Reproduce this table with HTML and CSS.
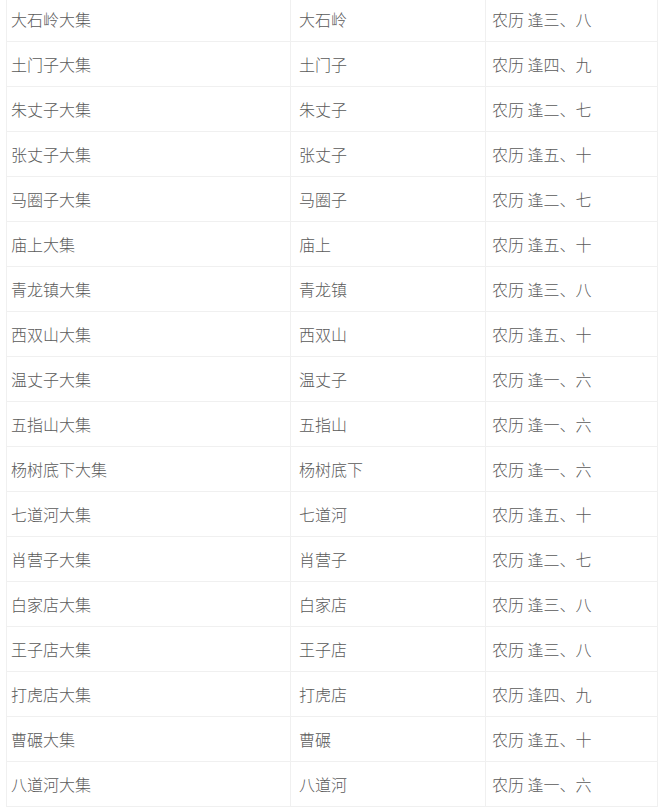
FILE: index.html
```html
<!DOCTYPE html>
<html lang="zh">
<head>
<meta charset="utf-8">
<link rel="stylesheet" href="styles.css">
</head>
<body>
<table class="markets">
<tbody>
<tr><td>大石岭大集</td><td>大石岭</td><td>农历 逢三、八</td></tr>
<tr><td>土门子大集</td><td>土门子</td><td>农历 逢四、九</td></tr>
<tr><td>朱丈子大集</td><td>朱丈子</td><td>农历 逢二、七</td></tr>
<tr><td>张丈子大集</td><td>张丈子</td><td>农历 逢五、十</td></tr>
<tr><td>马圈子大集</td><td>马圈子</td><td>农历 逢二、七</td></tr>
<tr><td>庙上大集</td><td>庙上</td><td>农历 逢五、十</td></tr>
<tr><td>青龙镇大集</td><td>青龙镇</td><td>农历 逢三、八</td></tr>
<tr><td>西双山大集</td><td>西双山</td><td>农历 逢五、十</td></tr>
<tr><td>温丈子大集</td><td>温丈子</td><td>农历 逢一、六</td></tr>
<tr><td>五指山大集</td><td>五指山</td><td>农历 逢一、六</td></tr>
<tr><td>杨树底下大集</td><td>杨树底下</td><td>农历 逢一、六</td></tr>
<tr><td>七道河大集</td><td>七道河</td><td>农历 逢五、十</td></tr>
<tr><td>肖营子大集</td><td>肖营子</td><td>农历 逢二、七</td></tr>
<tr><td>白家店大集</td><td>白家店</td><td>农历 逢三、八</td></tr>
<tr><td>王子店大集</td><td>王子店</td><td>农历 逢三、八</td></tr>
<tr><td>打虎店大集</td><td>打虎店</td><td>农历 逢四、九</td></tr>
<tr><td>曹碾大集</td><td>曹碾</td><td>农历 逢五、十</td></tr>
<tr><td>八道河大集</td><td>八道河</td><td>农历 逢一、六</td></tr>
</tbody>
</table>
</body>
</html>
```

FILE: styles.css
```css
html, body {
  margin: 0;
  padding: 0;
  background: #ffffff;
}
body {
  padding-left: 6px;
  font-family: "Noto Sans CJK SC", "Noto Sans", sans-serif;
  font-size: 16px;
  font-weight: 300;
  color: #5a5a5a;
}
.markets {
  margin-top: -4px;
  width: 652px;
  border-collapse: collapse;
  table-layout: fixed;
}
.markets td {
  height: 44px;
  padding: 0 0 0 4px;
  border: 1px solid #f0f0f0;
  vertical-align: middle;
  line-height: 20px;
  white-space: nowrap;
}
.markets td:nth-child(1) { width: 279px; }
.markets td:nth-child(2) { width: 186px; padding-left: 8px; }
.markets td:nth-child(3) { padding-left: 6px; }
```
